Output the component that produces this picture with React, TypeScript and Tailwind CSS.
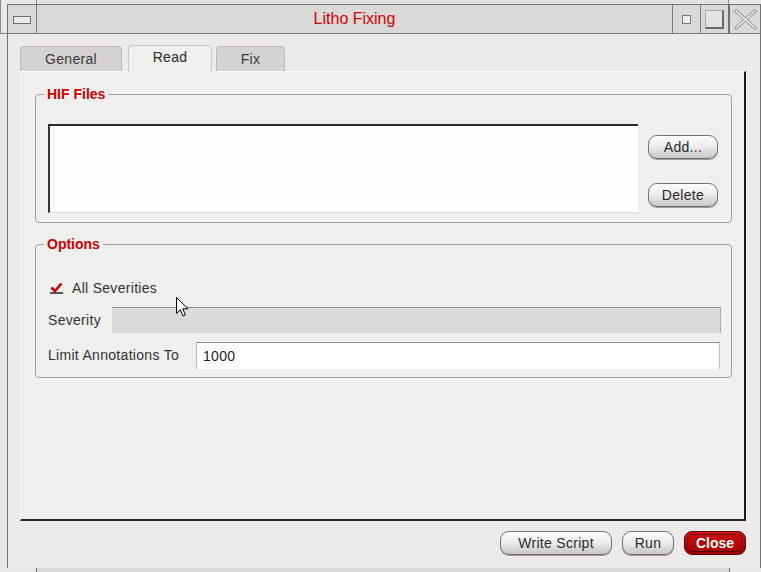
import React from "react";

function PillButton({ label, w }: { label: string; w: string }) {
  return (
    <div
      className={`${w} h-[24px] rounded-[9px] border border-[#767272] bg-linear-to-b from-[#fdfdfd] via-[#ebebeb] to-[#c9c7c7] shadow-[0_1px_0_#9a9696] flex items-center justify-center text-[14px] tracking-[0.3px] text-[#2a2a2a]`}
    >
      {label}
    </div>
  );
}

export default function App() {
  return (
    <div className="relative w-[761px] h-[572px] overflow-hidden bg-[#e9e8e6] flex flex-col font-[family-name:Liberation_Sans,Arial,sans-serif]">
      {/* top strip (window behind) */}
      <div className="h-[4px] flex shrink-0">
        <div className="w-[36px] border-l border-[#8a8a8a]" />
        <div className="w-[692px] border-l border-[#8a8a8a] bg-[#e2e2e2]" />
        <div className="flex-1 border-l border-[#8a8a8a]" />
      </div>

      <div className="flex-1 flex min-h-0">
        {/* left strip */}
        <div className="w-[7px] flex flex-col">
          <div className="h-[30px] border-l border-b border-[#8a8a8a]" />
          <div className="flex-1" />
        </div>

        {/* window */}
        <div className="w-[754px] flex flex-col border-l border-t border-r border-[#727272]">
          {/* title bar */}
          <div className="h-[29px] shrink-0 flex border-b border-[#7a7a7a] bg-[#dbd9d7]">
            <div className="w-[29px] border-r border-[#7a7a7a] flex items-center justify-center">
              <div className="w-[18px] h-[8px] border border-[#6e6e6e] bg-[#ebebeb] mt-[1px]" />
            </div>
            <div className="flex-1 flex items-center justify-center text-[16px] text-[#d40000]">
              Litho Fixing
            </div>
            <div className="w-[28px] border-l border-[#7a7a7a] flex items-center justify-center">
              <div className="w-[9px] h-[9px] border border-[#7a7a7a] bg-[#eeeeee] mt-[1px]" />
            </div>
            <div className="w-[28px] border-l border-[#7a7a7a] flex items-center justify-center">
              <div className="w-[19px] h-[19px] border-t border-l border-r-2 border-b-2 border-t-[#a8a8a8] border-l-[#a8a8a8] border-r-[#6a6a6a] border-b-[#6a6a6a] bg-[#e4e4e4]" />
            </div>
            <div className="w-[32px] border-l-2 border-[#6e6e6e] flex items-center justify-center">
              <svg width="23" height="21" viewBox="0 0 23 21">
                <path d="M2 2 C8 7 8 8 11.5 10.5 C15 8 15 7 21 2 M2 19 C8 14 8 13 11.5 10.5 C15 13 15 14 21 19" fill="none" stroke="#8a8a8a" strokeWidth="3.2" strokeLinecap="round" />
                <path d="M2 2 C8 7 8 8 11.5 10.5 C15 8 15 7 21 2 M2 19 C8 14 8 13 11.5 10.5 C15 13 15 14 21 19" fill="none" stroke="#fafafa" strokeWidth="1.4" strokeLinecap="round" />
              </svg>
            </div>
          </div>

          {/* body */}
          <div className="flex-1 flex flex-col pl-[12px] pt-[11px] bg-[#ecebe9]">
            {/* tabs */}
            <div className="h-[26px] flex items-end text-[14px] tracking-[0.3px]">
              <div className="w-[102px] h-[25px] rounded-t-[4px] border-t border-l border-r border-[#bdbab9] bg-[#d5d3d1] flex items-center justify-center text-[#3a3a3a] pt-[1px]">
                General
              </div>
              <div className="relative z-10 -mb-[1px] w-[84px] h-[27px] ml-[6px] rounded-t-[4px] border-t border-l border-r border-[#c9c6c5] bg-[#efefed] flex items-center justify-center text-[#2a2a2a] pb-[4px]">
                Read
              </div>
              <div className="w-[69px] h-[25px] ml-[4px] rounded-t-[4px] border-t border-l border-r border-[#bdbab9] bg-[#d5d3d1] flex items-center justify-center text-[#3a3a3a] pt-[1px]">
                Fix
              </div>
            </div>

            {/* panel */}
            <div className="w-[726px] h-[450px] border-l border-t border-r-2 border-b-2 border-l-[#fbfbfb] border-t-[#fbfbfb] border-r-[#1e1a1a] border-b-[#2e2626] bg-[#efefed] pl-[14px] pt-[14px] flex flex-col">
              {/* HIF Files */}
              <fieldset className="w-[697px] border border-[#a89e9e] rounded-[4px]">
                <legend className="ml-[8px] px-[3px] text-[14px] leading-[16px] font-bold text-[#cc0000]">
                  HIF Files
                </legend>
                <div className="flex pl-[12px] pt-[22px] pb-[9px]">
                  <div className="w-[590px] h-[89px] bg-[#fdfdfb] border-t-2 border-l-2 border-b border-t-[#2e2828] border-l-[#3a3434] border-b-[#dcdcdc]" />
                  <div className="ml-[10px] w-[70px] flex flex-col pt-[11px]">
                    <PillButton label="Add..." w="w-[70px]" />
                    <div className="h-[24px]" />
                    <PillButton label="Delete" w="w-[70px]" />
                  </div>
                </div>
              </fieldset>

              {/* Options */}
              <fieldset className="w-[697px] mt-[13px] border border-[#a89e9e] rounded-[4px]">
                <legend className="ml-[8px] px-[3px] text-[14px] leading-[16px] font-bold text-[#cc0000]">
                  Options
                </legend>
                <div className="flex flex-col pl-[12px] pr-[10px] pt-[26px] pb-[8px] text-[14px] tracking-[0.3px] text-[#333]">
                  <div className="h-[20px] flex items-center">
                    <svg width="13" height="12" viewBox="0 0 13 12" className="ml-[2px]">
                      <rect x="0" y="0" width="13" height="12" fill="#f4f2f2" />
                      <rect x="0" y="10" width="13" height="2" fill="#5a5252" />
                      <path d="M1.5 5.5 L5 9 L11.5 1.5" fill="none" stroke="#d00000" strokeWidth="2.6" />
                    </svg>
                    <span className="ml-[9px]">All Severities</span>
                  </div>
                  <div className="mt-[9px] h-[26px] flex items-center">
                    <span className="w-[64px]">Severity</span>
                    <div className="flex-1 h-full bg-[#dddbd9] border-t border-r border-t-[#8e8a8a] border-r-[#b0aaaa]" />
                  </div>
                  <div className="mt-[9px] h-[27px] flex items-center">
                    <span className="w-[148px]">Limit Annotations To</span>
                    <div className="flex-1 h-full mr-[1px] bg-white border-t border-l border-r border-t-[#8e8a8a] border-l-[#bdb8b8] border-r-[#c0baba] flex items-center pl-[6px] text-[#222]">
                      1000
                    </div>
                  </div>
                </div>
              </fieldset>
            </div>

            {/* bottom buttons */}
            <div className="w-[726px] mt-[10px] flex justify-end">
              <PillButton label="Write Script" w="w-[112px]" />
              <div className="ml-[10px]">
                <PillButton label="Run" w="w-[52px]" />
              </div>
              <div className="ml-[10px] w-[62px] h-[24px] rounded-[8px] border border-[#5a0000] bg-linear-to-b from-[#d01010] to-[#a00000] p-[2px]">
                <div className="w-full h-full rounded-[6px] border border-dotted border-black flex items-center justify-center text-[14px] font-bold text-white">
                  Close
                </div>
              </div>
            </div>
          </div>
        </div>
      </div>

      {/* bottom strip (window behind) */}
      <div className="h-[4px] flex shrink-0">
        <div className="w-[36px]" />
        <div className="w-[693px] border-l border-[#6e6e6e] bg-[#d9d9d9]" />
        <div className="flex-1 border-l border-[#6e6e6e]" />
      </div>

      {/* mouse cursor */}
      <svg width="14" height="21" viewBox="0 0 14 21" className="absolute left-[176px] top-[297px]">
        <path d="M0.5 0.5 L0.5 16.5 L4.3 12.8 L7 19 L9.4 18 L6.8 11.8 L12 11.8 Z" fill="white" stroke="black" strokeWidth="1" />
      </svg>
    </div>
  );
}
